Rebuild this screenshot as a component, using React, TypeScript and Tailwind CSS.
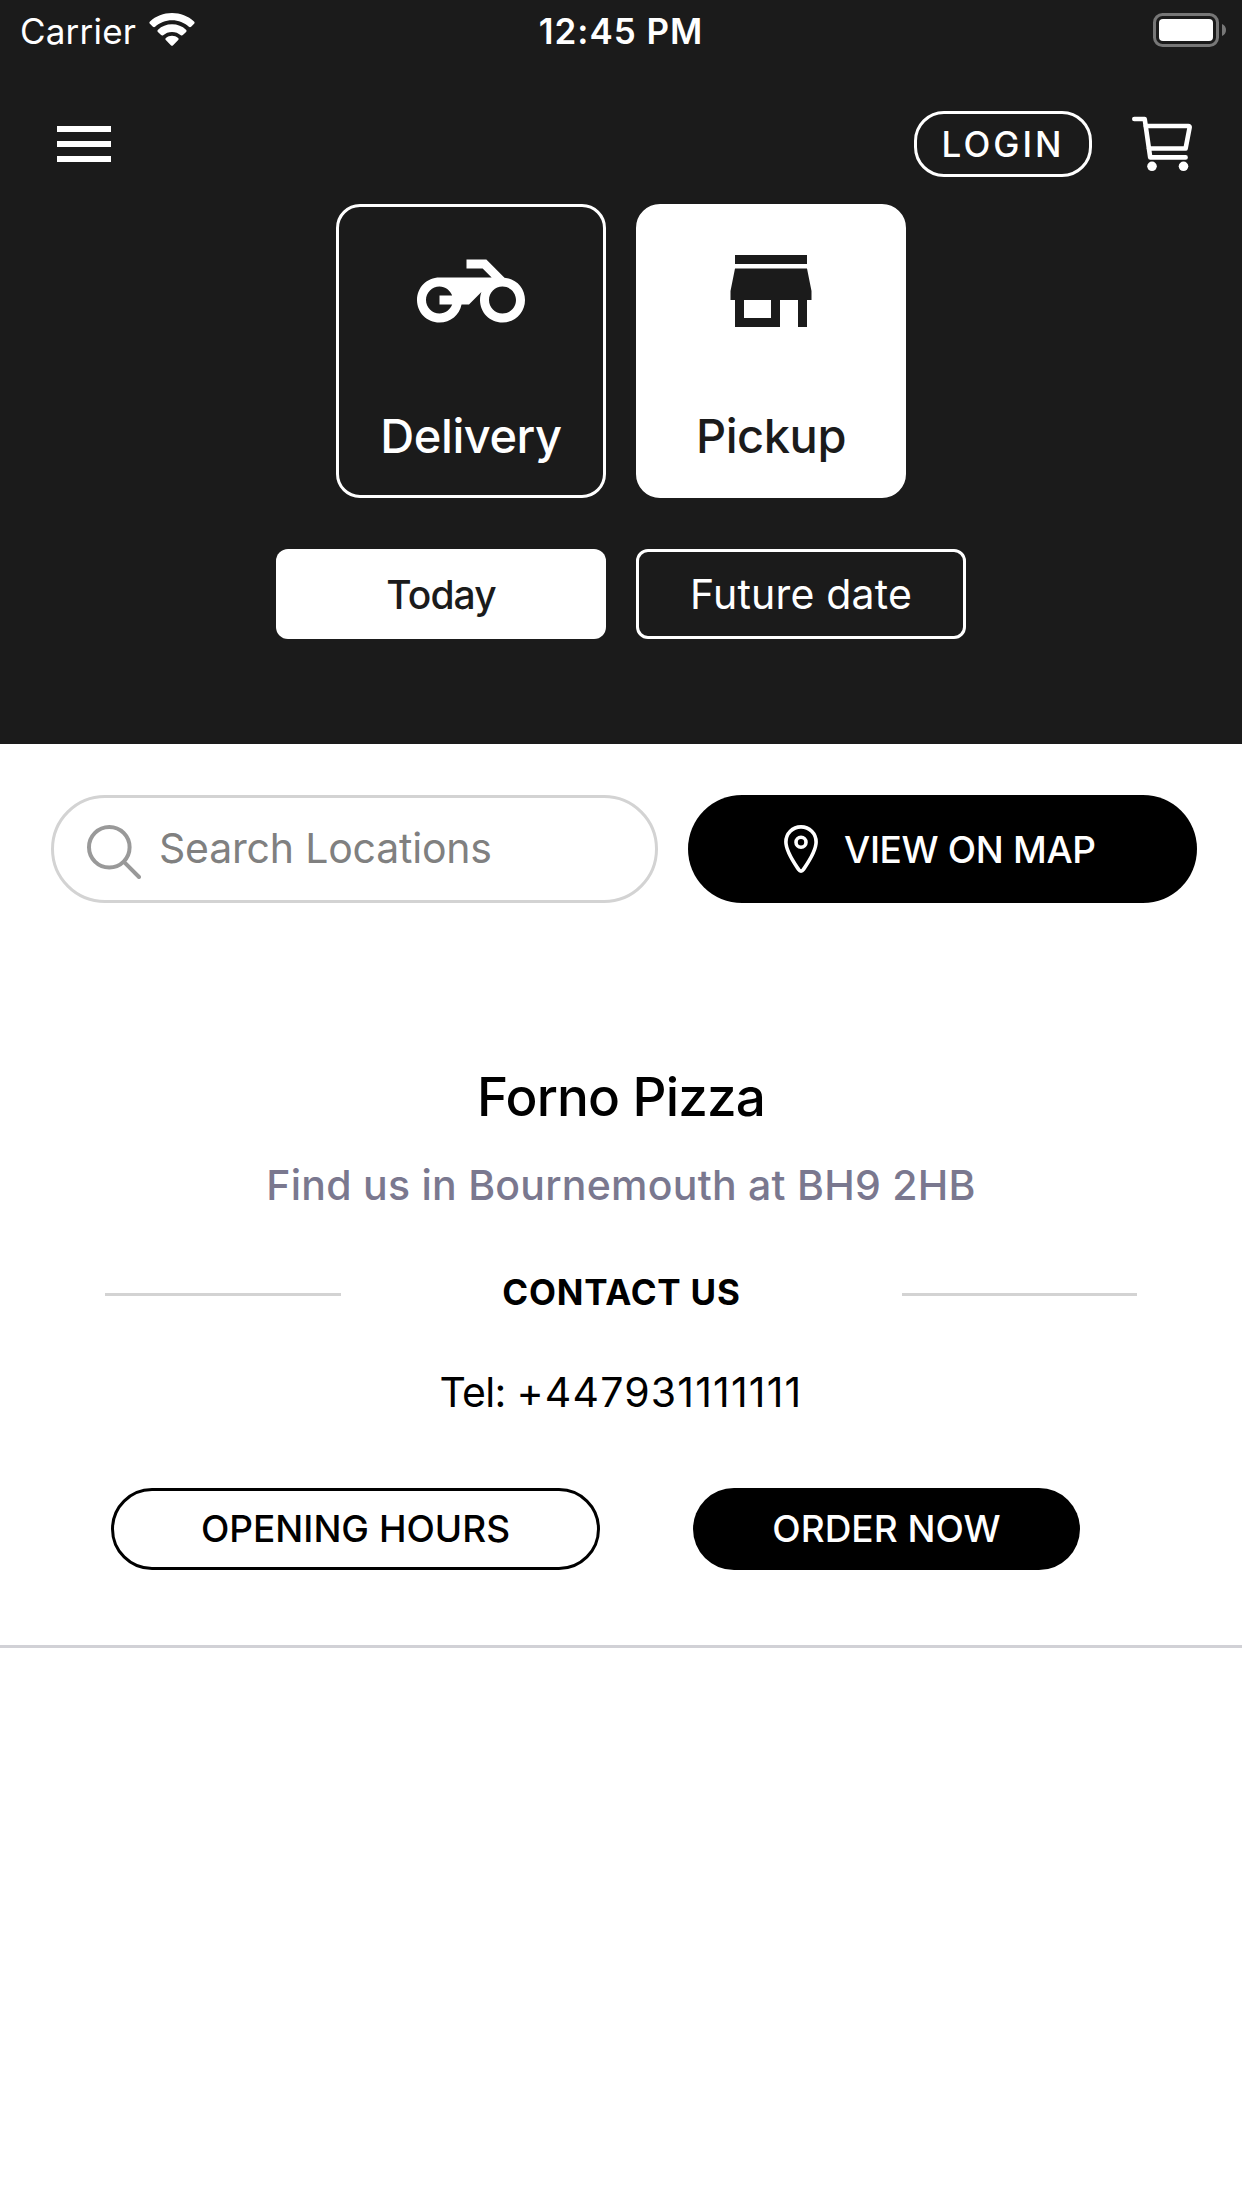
import React, { useState } from "react";

function WifiIcon() {
  return (
    <svg width="46" height="34" viewBox="0 0 46 34" fill="#fff">
      <path d="M23 0C14.6 0 6.800 3.100 1 8.400c-.8.700-.8 1.600-.1 2.300l3 3c.6.600 1.500.6 2.200.1C10.600 9.700 16.500 7.300 23 7.300s12.400 2.400 16.900 6.500c.7.500 1.600.5 2.200-.1l3-3c.7-.7.7-1.600-.1-2.300C39.200 3.100 31.400 0 23 0z" />
      <path d="M23 11.300c-5.400 0-10.300 2-14 5.400-.7.600-.7 1.600-.1 2.200l3.200 3.200c.6.600 1.400.6 2.100.1 2.400-2.100 5.400-3.300 8.800-3.300s6.400 1.200 8.800 3.300c.7.500 1.500.5 2.100-.1l3.200-3.200c.6-.6.6-1.600-.1-2.200-3.700-3.400-8.600-5.400-14-5.400z" />
      <path d="M23 22.700c-2.300 0-4.400.8-6.100 2.200-.7.600-.7 1.400-.1 2l5.300 5.500c.5.500 1.300.5 1.800 0l5.300-5.500c.6-.6.6-1.400-.1-2-1.700-1.400-3.800-2.200-6.100-2.200z" />
    </svg>
  );
}

function BatteryIcon() {
  return (
    <svg width="74" height="34" viewBox="0 0 74 34">
      <rect x="1.500" y="1.500" width="63" height="31" rx="8" fill="none" stroke="#777" strokeWidth="3" />
      <rect x="6" y="6" width="54" height="22" rx="4" fill="#fff" />
      <path d="M69 11c2.500 1 4 3.300 4 6s-1.500 5-4 6z" fill="#777" />
    </svg>
  );
}

function CartIcon() {
  return (
    <svg width="62" height="58" viewBox="0 0 62 58" fill="none" stroke="#fff" strokeWidth="4.600" strokeLinecap="round" strokeLinejoin="round">
      <path d="M4.300 4H14.700L20.200 42.400H55.600" />
      <path d="M15.800 11H58.300Q59.900 11 59.600 12.600L55.600 33.500H19" />
      <circle cx="22" cy="51.300" r="4.800" fill="#fff" stroke="none" />
      <circle cx="53.500" cy="51.300" r="4.800" fill="#fff" stroke="none" />
    </svg>
  );
}

function BikeIcon() {
  return (
    <svg width="108" height="108" viewBox="0 0 24 24" fill="currentColor">
      <path d="M19.440 9.030L15.410 5H11v2h3.590l2 2H5c-2.800 0-5 2.200-5 5s2.200 5 5 5c2.460 0 4.450-1.690 4.900-4h1.650l2.770-2.770c-.21.540-.32 1.140-.32 1.770 0 2.800 2.200 5 5 5s5-2.200 5-5c0-2.650-1.970-4.770-4.560-4.970zM7.820 15C7.400 16.150 6.280 17 5 17c-1.630 0-3-1.370-3-3s1.370-3 3-3c1.280 0 2.400.85 2.820 2H5v2h2.820zM19 17c-1.660 0-3-1.340-3-3s1.340-3 3-3 3 1.340 3 3-1.340 3-3 3z" />
    </svg>
  );
}

function StoreIcon() {
  return (
    <svg width="108" height="108" viewBox="0 0 24 24" fill="currentColor">
      <path d="M20 4H4v2h16V4zm1 10v-2l-1-5H4l-1 5v2h1v6h10v-6h4v6h2v-6h1zm-9 4H6v-4h6v4z" />
    </svg>
  );
}

function SearchIcon() {
  return (
    <svg className="mt-[6px]" width="54" height="54" viewBox="0 0 54 54" fill="none" stroke="#999" strokeWidth="4" strokeLinecap="round">
      <circle cx="22.300" cy="22.300" r="20.300" />
      <path d="M37.200 37.200L52 52" />
    </svg>
  );
}

function PinIcon() {
  return (
    <svg width="34" height="48" viewBox="0 0 34 48" fill="none" stroke="#fff" strokeWidth="3.600" strokeLinejoin="round">
      <path d="M17 1.900C8.500 1.900 1.900 8.600 1.900 17c0 9.500 8.300 21 12.900 27.800 1.100 1.700 3.300 1.700 4.400 0C23.800 38 32.100 26.500 32.100 17c0-8.400-6.600-15.100-15.100-15.100z" />
      <circle cx="17" cy="17.200" r="5" />
    </svg>
  );
}

function ModeCard({ label, icon, active, onClick }: { label: string; icon: React.ReactNode; active: boolean; onClick: () => void }) {
  return (
    <button
      onClick={onClick}
      className={`flex h-[294px] w-[270px] flex-col items-center rounded-[24px] border-[3px] border-white pt-[30px] ${
        active ? "bg-white text-[#1b1b1b]" : "text-white"
      }`}
    >
      {icon}
      <span className="mt-[61px] text-[47px] leading-[60px] font-medium tracking-[-0.45px]">{label}</span>
    </button>
  );
}

export default function App() {
  const [mode, setMode] = useState("pickup");
  const [query, setQuery] = useState("");

  return (
    <div className="min-h-[2208px] w-[1242px] bg-white font-['Inter',sans-serif] text-black">
      <header className="h-[744px] bg-[#1b1b1b] text-white">
        {/* status bar */}
        <div className="grid h-[60px] grid-cols-3 items-start pt-[13px] text-[35px] leading-[37px]">
          <div className="flex gap-[13px] pl-[20px]">
            <span className="tracking-[0.2px]">Carrier</span>
            <WifiIcon />
          </div>
          <span className="text-center font-semibold tracking-[0.95px]">12:45 PM</span>
          <div className="flex justify-end pr-[15px]">
            <BatteryIcon />
          </div>
        </div>

        {/* nav */}
        <div className="flex h-[144px] items-start justify-between pr-[50px] pl-[57px]">
          <button className="mt-[66px] flex w-[54px] flex-col gap-[9px]">
            <span className="h-[6px] bg-white" />
            <span className="h-[6px] bg-white" />
            <span className="h-[6px] bg-white" />
          </button>
          <div className="mt-[51px] flex gap-[38px]">
            <button className="h-[66px] w-[178px] rounded-[30px] border-[3px] border-white text-[35px] leading-[60px] font-medium tracking-[3px]">
              LOGIN
            </button>
            <div className="mt-[4px]">
              <CartIcon />
            </div>
          </div>
        </div>

        <div className="flex justify-center gap-[30px]">
          <ModeCard label="Delivery" icon={<BikeIcon />} active={mode === "delivery"} onClick={() => setMode("delivery")} />
          <ModeCard label="Pickup" icon={<StoreIcon />} active={mode === "pickup"} onClick={() => setMode("pickup")} />
        </div>

        <div className="mt-[51px] flex justify-center gap-[30px]">
          <button className="h-[90px] w-[330px] rounded-[12px] bg-white pt-[2px] text-[39px] font-medium tracking-[-0.9px] text-[#1b1b1b]">Today</button>
          <button className="h-[90px] w-[330px] rounded-[12px] border-[3px] border-white pt-[2px] text-[41px] tracking-[0.2px]">Future date</button>
        </div>
      </header>

      <main>
        <div className="flex gap-[30px] pt-[51px] pl-[51px]">
          <label className="flex h-[108px] w-[607px] items-center gap-[18px] rounded-full border-[3px] border-[#d3d3d3] pl-[33px]">
            <SearchIcon />
            <input
              value={query}
              onChange={(e) => setQuery(e.target.value)}
              placeholder="Search Locations"
              className="w-[440px] text-[41px] tracking-[-0.2px] text-black outline-none placeholder:text-[#808080]"
            />
          </label>
          <button className="flex h-[108px] w-[509px] items-center gap-[26px] rounded-full bg-black pl-[96px] text-[37px] font-medium tracking-[-0.35px] text-white">
            <PinIcon />
            <span className="pt-[1px]">VIEW ON MAP</span>
          </button>
        </div>

        {/* location */}
        <section className="h-[745px] border-b-[3px] border-[#d1d1d6] pt-[164px] text-center">
          <h1 className="text-[53px] leading-[60px] font-medium tracking-[-0.85px]">Forno Pizza</h1>
          <p className="mt-[33px] text-[41px] leading-[50px] font-medium tracking-[0.25px] text-[#7a788f]">Find us in Bournemouth at BH9 2HB</p>

          <div className="mt-[57px] flex items-center justify-between pr-[105px] pl-[105px]">
            <span className="mt-[4px] h-[3px] w-[236px] bg-[#d3d3d3]" />
            <h2 className="text-[35px] leading-[50px] font-bold tracking-[0.8px]">CONTACT US</h2>
            <span className="mt-[4px] h-[3px] w-[235px] bg-[#d3d3d3]" />
          </div>

          <p className="mt-[50px] text-[41px] leading-[50px]">
            <span className="tracking-[-0.7px]">Tel: </span>
            <span className="tracking-[1.2px]">+447931111111</span>
          </p>

          <div className="mt-[71px] flex gap-[93px] pl-[111px] text-[37px] leading-[76px] font-medium tracking-normal">
            <button className="h-[82px] w-[489px] rounded-full border-[3px] border-black">OPENING HOURS</button>
            <button className="h-[82px] w-[387px] rounded-full bg-black text-white">ORDER NOW</button>
          </div>
        </section>
      </main>
    </div>
  );
}
